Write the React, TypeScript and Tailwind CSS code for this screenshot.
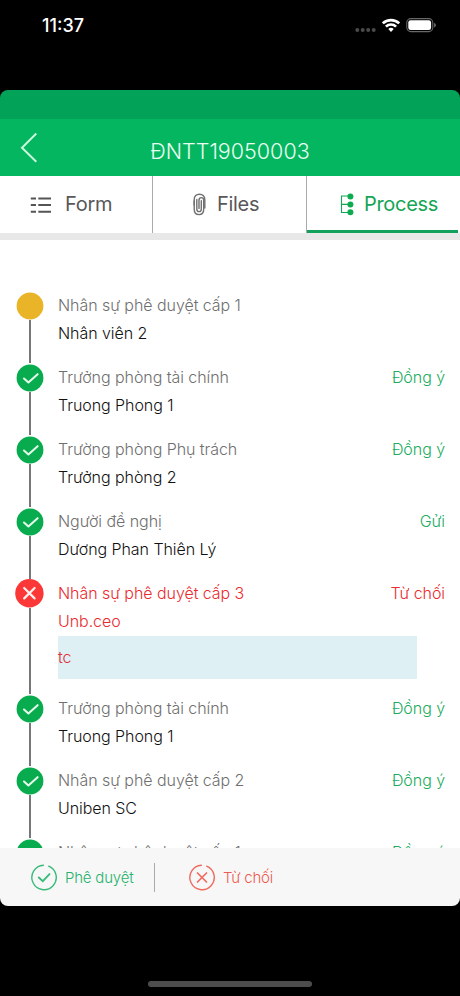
import React from 'react';
import clsx from 'clsx';

type Status = 'pending' | 'approved' | 'rejected';

interface Step {
  title: string;
  name?: string;
  status: Status;
  action?: string;
  note?: string;
}

const steps: Step[] = [
  { title: 'Nhân sự phê duyệt cấp 1', name: 'Nhân viên 2', status: 'pending' },
  { title: 'Trưởng phòng tài chính', name: 'Truong Phong 1', status: 'approved', action: 'Đồng ý' },
  { title: 'Trường phòng Phụ trách', name: 'Trưởng phòng 2', status: 'approved', action: 'Đồng ý' },
  { title: 'Người đề nghị', name: 'Dương Phan Thiên Lý', status: 'approved', action: 'Gửi' },
  { title: 'Nhân sự phê duyệt cấp 3', name: 'Unb.ceo', status: 'rejected', action: 'Từ chối', note: 'tc' },
  { title: 'Trưởng phòng tài chính', name: 'Truong Phong 1', status: 'approved', action: 'Đồng ý' },
  { title: 'Nhân sự phê duyệt cấp 2', name: 'Uniben SC', status: 'approved', action: 'Đồng ý' },
  { title: 'Nhân sự phê duyệt cấp 1', status: 'approved', action: 'Đồng ý' },
];

const StatusBar = () => (
  <div className="flex h-[90px] shrink-0 items-start justify-between pl-[42px] pr-6 pt-[14px] text-white">
    <span className="text-[18px] font-medium leading-6">11:37</span>
    <svg width="82" height="24" viewBox="0 0 82 24" fill="none">
      <g fill="#4a4a4a">
        <circle cx="3.3" cy="16" r="2" />
        <circle cx="8.7" cy="16" r="2" />
        <circle cx="14.2" cy="16" r="2" />
        <circle cx="19.7" cy="16" r="2" />
      </g>
      <g stroke="#fff" strokeWidth="2.7">
        <path d="M28.8 9.4a11.7 11.7 0 0 1 16.4 0" />
        <path d="M31.9 12.6a7.3 7.3 0 0 1 10.2 0" />
      </g>
      <path d="M37 17.9l-2.7-2.8a3.9 3.9 0 0 1 5.4 0z" fill="#fff" />
      <rect x="52.8" y="4.6" width="26" height="13" rx="4" stroke="#686868" strokeWidth="1.1" />
      <rect x="54.3" y="6.2" width="22.8" height="9.9" rx="2.4" fill="#fff" />
      <path d="M80.2 9v4.4c1-.4 1.6-1.2 1.6-2.2s-.6-1.8-1.6-2.2z" fill="#777" />
    </svg>
  </div>
);

const Header = () => (
  <div className="shrink-0 overflow-hidden rounded-t-[8px]">
    <div className="h-[29px] bg-[#02a258]" />
    <div className="grid h-[57px] grid-cols-[60px_1fr_60px] items-center bg-[#04b660] text-[#e9fff2]">
      <svg className="ml-5 mt-[13px] self-start" width="18" height="32" viewBox="0 0 18 32" fill="none" stroke="#c9f7dc" strokeWidth="2">
        <path d="M16.3 1.5L2 15.7l14.3 14" />
      </svg>
      <h1 className="pt-[6px] text-center text-[21.5px] font-light leading-7">ĐNTT19050003</h1>
    </div>
  </div>
);

const Tabs = () => (
  <div className="flex h-[64px] shrink-0 border-b-[7px] border-[#e8e8e8] bg-white text-[20px] leading-[57px] tracking-[-0.3px] text-[#58585a]">
    <div className="flex w-[153px] items-center border-r border-[#aaa] pl-[30px]">
      <svg width="21" height="18" viewBox="0 0 21 18" stroke="#555" strokeWidth="1.9">
        <path d="M.8 2.5H6M8.3 2.5H21M.8 9H6M8.3 9H21M.8 15.8H6M8.3 15.8H21" />
      </svg>
      <span className="ml-[14px]">Form</span>
    </div>
    <div className="flex w-[154px] items-center border-r border-[#aaa] pl-[40px]">
      <svg width="13" height="23" viewBox="0 0 13 23" fill="none" stroke="#707070" strokeWidth="1.4" strokeLinecap="round">
        <path d="M1.2 8v8c0 3.400 2 5.600 4.800 5.600s4.700-2.200 4.700-5.600V7.200c0-1.600-.8-2.600-2.200-2.600S6 5.600 6 7.200v8.200" />
        <path d="M1.200 12V6.400C1.200 3.200 3.400 1.200 6.400 1.200s5.400 2 5.400 5.200V15M3.800 6.400v9.500c0 1.700.9 2.700 2.300 2.700s2.200-1 2.200-2.700V7.600" />
      </svg>
      <span className="ml-[11px]">Files</span>
    </div>
    <div className="flex w-[151px] items-center border-b-[3px] border-[#12a15a] pl-[33px] pt-[3px] text-[#14a556]">
      <svg width="14" height="23" viewBox="0 0 14 23" fill="none" stroke="#14a556">
        <path d="M10 3H1.5v16.5H10M1.5 11.4H10" strokeWidth="1.1" />
        <g fill="#0cab50" stroke="none">
          <circle cx="10.4" cy="3.5" r="3" />
          <circle cx="10.4" cy="11.4" r="3" />
          <circle cx="10.4" cy="19.2" r="3" />
        </g>
      </svg>
      <span className="ml-[10px]">Process</span>
    </div>
  </div>
);

const StepIcon = ({ status }: { status: Status }) => {
  if (status === 'pending') {
    return (
      <svg className="shrink-0" width="30" height="29" viewBox="0 0 30 29">
        <circle cx="15" cy="15" r="13.4" fill="#e9b427" />
      </svg>
    );
  }
  if (status === 'rejected') {
    return (
      <svg className="shrink-0" width="30" height="29" viewBox="0 0 30 29" fill="none">
        <circle cx="14.4" cy="14.2" r="14.2" fill="#fb3737" />
        <path d="M9.2 9l10.4 10.4M19.6 9L9.2 19.4" stroke="#fff0f0" strokeWidth="2.2" strokeLinecap="round" />
      </svg>
    );
  }
  return (
    <svg className="shrink-0" width="30" height="29" viewBox="0 0 30 29" fill="none">
      <circle cx="15" cy="15" r="13.4" fill="#08ab4d" />
      <path d="M9 15.5l4.4 4 9.2-8.3" stroke="#e3fbea" strokeWidth="2.1" strokeLinecap="round" strokeLinejoin="round" />
    </svg>
  );
};

const StepRow = ({ step }: { step: Step }) => {
  const rejected = step.status === 'rejected';
  return (
    <li className="flex shrink-0">
      <div className="mr-[13px] flex w-[30px] flex-col items-center">
        <StepIcon status={step.status} />
        <div className="w-[2px] flex-1 bg-[#77777a]" />
      </div>
      <div className="flex-1 pb-[15px]">
        <div className={clsx('flex justify-between pr-[15px] leading-[29px]', rejected ? 'text-[#ea2a2f]' : 'text-[#6f6f6f]')}>
          <span>{step.title}</span>
          <span className={rejected ? 'text-[#ea2a2f]' : 'text-[#20ac60]'}>{step.action}</span>
        </div>
        <div className={clsx('h-[28px] leading-[27px]', rejected ? 'text-[#ea2a2f]' : 'text-[#111]')}>{step.name}</div>
        {step.note && (
          <div className="mr-[43px] h-[43px] bg-[#dff0f5] leading-[43px] text-[#df3038]">{step.note}</div>
        )}
      </div>
    </li>
  );
};

const Footer = () => (
  <div className="flex h-[58px] shrink-0 items-center rounded-b-[8px] bg-[#f7f7f7] pl-[31px] text-[15px] font-light leading-5 tracking-[-0.2px]">
    <svg width="26" height="27" viewBox="0 0 26 27" fill="none" stroke="#3abb7b" strokeWidth="1.4" strokeLinecap="round">
      <path d="M17.7 2.2A12.2 12.2 0 1 1 12.4 1.3" />
      <path d="M7.8 13.5l4 3.6 6.700-7" strokeWidth="1.9" />
    </svg>
    <span className="ml-2 w-[89px] pt-[2px] text-[#25b26c]">Phê duyệt</span>
    <div className="h-[29px] w-px bg-[#aaa]" />
    <svg className="ml-[34px]" width="26" height="27" viewBox="0 0 26 27" fill="none" stroke="#ef6b60" strokeWidth="1.4" strokeLinecap="round">
      <path d="M17.7 2.2A12.2 12.2 0 1 1 12.4 1.3" />
      <path d="M8.5 9l9 9M17.5 9l-9 9" strokeWidth="1.7" />
    </svg>
    <span className="ml-2 pt-[2px] text-[#ef5a50]">Từ chối</span>
  </div>
);

const App = () => {
  return (
    <div className="flex h-[996px] w-[460px] flex-col overflow-hidden bg-black font-[Inter,sans-serif]">
      <StatusBar />
      <Header />
      <Tabs />
      <ul className="flex min-h-0 flex-1 flex-col overflow-hidden bg-white pl-[15px] pt-[51px] text-[16px] font-light tracking-[-0.06px]">
        {steps.map((step, i) => (
          <StepRow key={i} step={step} />
        ))}
      </ul>
      <Footer />
      <div className="flex h-[90px] shrink-0 items-end justify-center pb-[9px]">
        <div className="h-[6px] w-[164px] rounded-full bg-[#4d4d4d]" />
      </div>
    </div>
  );
};

export default App;
